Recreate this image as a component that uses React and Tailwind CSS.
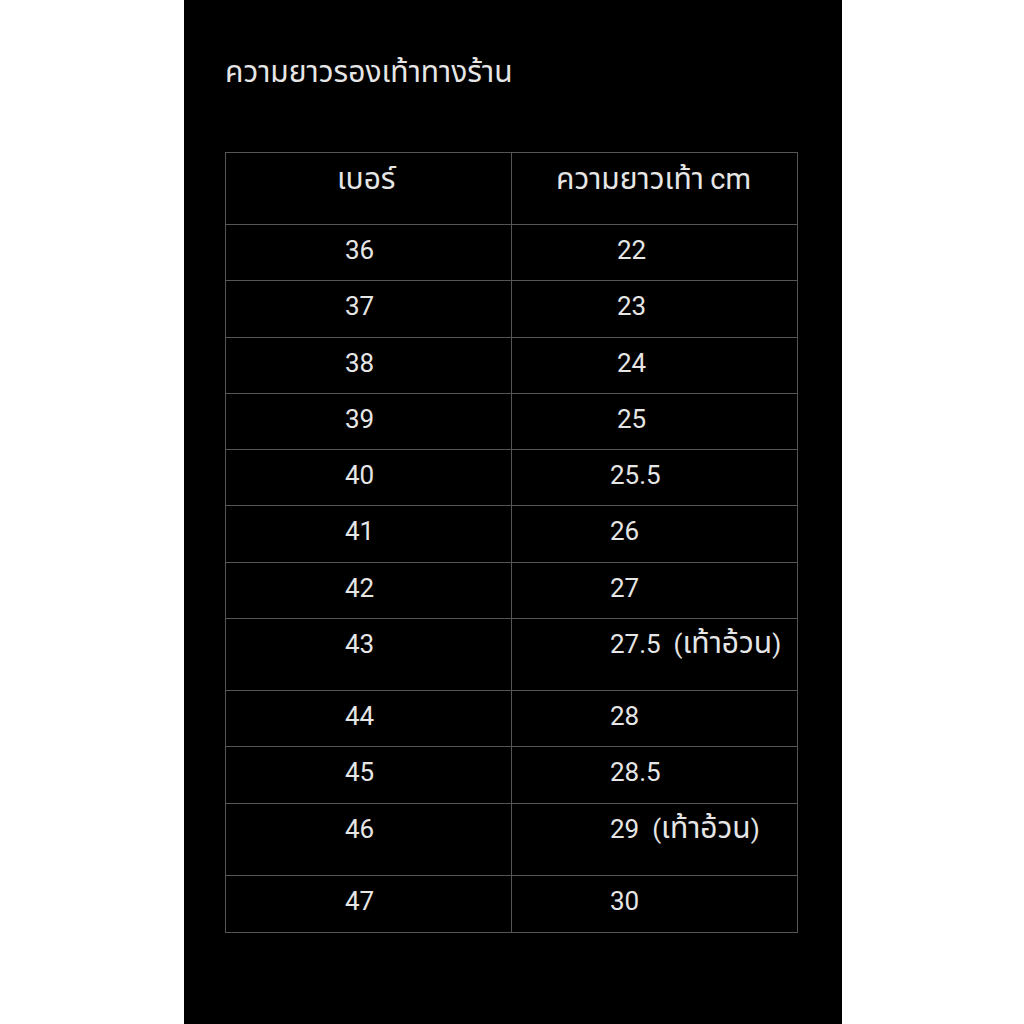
import React from 'react';

// Thai runs are set a little larger so they match the reference's glyph width
const T = ({ children }) => <span className="text-[30px] leading-[30px]">{children}</span>;

const rows = [
  { size: '36', len: '22', indent: 'pl-[105px]' },
  { size: '37', len: '23', indent: 'pl-[105px]' },
  { size: '38', len: '24', indent: 'pl-[105px]' },
  { size: '39', len: '25', indent: 'pl-[105px]' },
  { size: '40', len: '25.5', indent: 'pl-[98px]' },
  { size: '41', len: '26', indent: 'pl-[98px]' },
  { size: '42', len: '27', indent: 'pl-[98px]' },
  { size: '43', len: '27.5', note: 'เท้าอ้วน', indent: 'pl-[98px]', tall: true },
  { size: '44', len: '28', indent: 'pl-[98px]' },
  { size: '45', len: '28.5', indent: 'pl-[98px]' },
  { size: '46', len: '29', note: 'เท้าอ้วน', indent: 'pl-[98px]', tall: true },
  { size: '47', len: '30', indent: 'pl-[98px]' },
];

const App = () => {
  return (
    <div className="min-h-screen bg-white flex" style={{ fontFamily: 'Roboto, "Noto Sans Thai", "Noto Sans", sans-serif' }}>
      <div className="ml-[184px] w-[658px] h-[1024px] bg-black text-[#e6e6e6] pl-[41px] pt-[56px]">
        <h1 className="h-[36px] text-[25px] leading-[36px] font-normal"><T>ความยาวรองเท้าทางร้าน</T></h1>

        <div className="mt-[60px] w-[573px] border border-[#555]">
          {/* header */}
          <div className="grid grid-cols-[286px_1fr] h-[72px] border-b border-[#555]">
            <div className="border-r border-[#555] pl-[111px] pt-[9px] text-[26px] leading-[36px]"><T>เบอร์</T></div>
            <div className="pl-[44px] pt-[9px] text-[26px] leading-[36px]">
              <T>ความยาวเท้า</T> <span className="text-[29px] leading-[30px]">cm</span>
            </div>
          </div>
          {rows.map((r, i) => (
            <div
              key={r.size}
              className={`grid grid-cols-[286px_1fr] ${r.tall ? 'h-[72px]' : 'h-[56.3px]'} ${i < rows.length - 1 ? 'border-b border-[#555]' : ''}`}
            >
              <div className="border-r border-[#555] pl-[119px] pt-[7px] text-[26px] leading-[36px]">{r.size}</div>
              <div className={`${r.indent} pt-[7px] text-[26px] leading-[36px] whitespace-pre`}>
                {r.len}
                {r.note && <>{'  ('}<T>{r.note}</T>{')'}</>}
              </div>
            </div>
          ))}
        </div>
      </div>
    </div>
  );
};

export default App;
